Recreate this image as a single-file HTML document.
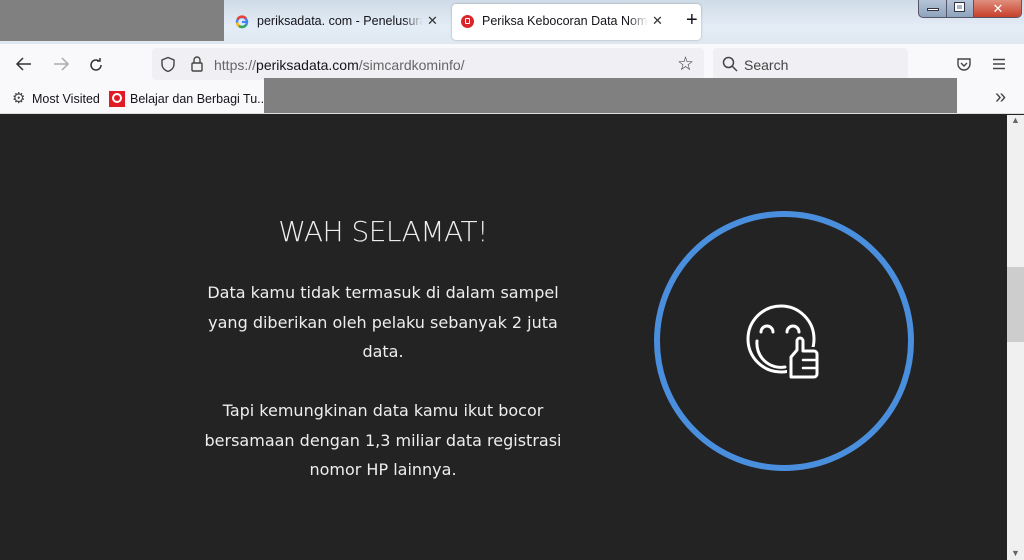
<!DOCTYPE html>
<html><head><meta charset="utf-8"><style>
*{margin:0;padding:0;box-sizing:border-box}
body{width:1024px;height:560px;overflow:hidden;position:relative;font-family:"Liberation Sans","DejaVu Sans",sans-serif;background:#232323}
.a{position:absolute}
.tabbar{left:0;top:0;width:1024px;height:44px;background:linear-gradient(180deg,#cfdbe8,#e4edf6 60%,#dfe8f1)}
.tx{font-size:12.5px;color:#15141a;white-space:nowrap}
.nav{left:0;top:44px;width:1024px;height:42px;background:#f9f9fb}
.bm{left:0;top:86px;width:1024px;height:28px;background:#f9f9fb;border-bottom:1px solid #ddd}
.c{font-family:"DejaVu Sans","Liberation Sans",sans-serif;color:#eee;text-align:center}
.x{font-size:13px;color:#333}
</style></head><body>
<div class="a tabbar"></div>
<div class="a" style="left:0;top:0;width:224px;height:41px;background:#808080"></div>
<svg class="a" style="left:235px;top:15px" width="14" height="14" viewBox="0 0 14 14"><circle cx="7" cy="7" r="5" fill="none" stroke="#4285f4" stroke-width="2.4"/><path d="M7 7h5" stroke="#4285f4" stroke-width="2.2"/><path d="M2.5 4.5A5 5 0 0 1 11 3.5" stroke="#ea4335" stroke-width="2.4" fill="none"/><path d="M2 7.5A5 5 0 0 0 4 11" stroke="#fbbc05" stroke-width="2.4" fill="none"/><path d="M4 11A5 5 0 0 0 11 10" stroke="#34a853" stroke-width="2.4" fill="none"/></svg>
<div class="a tx" style="left:257px;top:14px;width:166px;overflow:hidden;-webkit-mask-image:linear-gradient(90deg,#000 88%,transparent)">periksadata. com - Penelusuran</div>
<div class="a x" style="left:427px;top:13px">✕</div>
<div class="a" style="left:452px;top:4px;width:249px;height:36px;background:#fff;border-radius:4px;box-shadow:0 0 2px rgba(0,0,0,.3)"></div>
<div class="a" style="left:461px;top:15px;width:13px;height:13px;border-radius:50%;background:#d9262b"></div>
<div class="a" style="left:465px;top:18px;width:5px;height:6px;border:1px solid #fff;border-radius:1px"></div>
<div class="a tx" style="left:482px;top:14px;width:166px;overflow:hidden;-webkit-mask-image:linear-gradient(90deg,#000 88%,transparent)">Periksa Kebocoran Data Nomor</div>
<div class="a x" style="left:652px;top:13px">✕</div>
<div class="a tx" style="left:686px;top:9px;font-size:20px">+</div>
<div class="a" style="left:918px;top:0;width:104px;height:18px;border:1px solid #556;border-top:none;border-radius:0 0 5px 5px;background:linear-gradient(#b5c4d8,#8ea3bd);overflow:hidden">
<div class="a" style="left:0;top:0;width:28px;height:17px;border-right:1px solid #556"></div>
<div class="a" style="left:8px;top:8px;width:12px;height:3px;background:#fff;border:1px solid #334"></div>
<div class="a" style="left:28px;top:0;width:27px;height:17px;border-right:1px solid #556"></div>
<div class="a" style="left:36px;top:3px;width:9px;height:8px;border:2px solid #fff;outline:1px solid #334"></div>
<div class="a" style="left:55px;top:0;width:48px;height:17px;background:linear-gradient(#e08f7f,#c7402a);color:#fff;font-weight:bold;text-align:center;font-size:13px;line-height:17px">✕</div>
</div>
<div class="a nav"></div>
<svg class="a" style="left:14px;top:56px" width="20" height="16" viewBox="0 0 20 16" fill="none" stroke="#333" stroke-width="1.5"><path d="M3 8h14M9 2L3 8l6 6"/></svg>
<svg class="a" style="left:51px;top:56px" width="20" height="16" viewBox="0 0 20 16" fill="none" stroke="#aaa" stroke-width="1.5"><path d="M3 8h14M11 2l6 6-6 6"/></svg>
<svg class="a" style="left:88px;top:57px" width="16" height="16" viewBox="0 0 16 16" fill="none" stroke="#333" stroke-width="1.5"><path d="M13 8A5 5 0 1 1 11 4"/><path d="M9 4h3V1" /></svg>
<div class="a" style="left:152px;top:48px;width:552px;height:32px;background:#f0f0f4;border-radius:4px"></div>
<svg class="a" style="left:160px;top:56px" width="16" height="17" viewBox="0 0 16 17" fill="none" stroke="#444" stroke-width="1.4"><path d="M8 1.5L2 4v4c0 4 3 6.5 6 7.5 3-1 6-3.5 6-7.5V4z"/></svg>
<svg class="a" style="left:190px;top:55px" width="14" height="18" viewBox="0 0 14 18" fill="none" stroke="#444" stroke-width="1.4"><rect x="2" y="8" width="10" height="8" rx="1"/><path d="M4 8V5a3 3 0 0 1 6 0v3"/></svg>
<div class="a" style="left:214px;top:57px;font-size:14px;color:#666;white-space:nowrap">https://<span style="color:#15141a">periksadata.com</span>/simcardkominfo/</div>
<div class="a" style="left:677px;top:53px;font-size:19px;color:#333">☆</div>
<div class="a" style="left:713px;top:48px;width:195px;height:32px;background:#f0f0f4;border-radius:4px"></div>
<svg class="a" style="left:722px;top:56px" width="16" height="16" viewBox="0 0 16 16" fill="none" stroke="#444" stroke-width="1.5"><circle cx="6.5" cy="6.5" r="5"/><path d="M10 10l5 5"/></svg>
<div class="a" style="left:744px;top:57px;font-size:14px;color:#444">Search</div>
<svg class="a" style="left:956px;top:57px" width="16" height="15" viewBox="0 0 16 15" fill="none" stroke="#444" stroke-width="1.4"><path d="M2 2h12v5a6 6 0 0 1-12 0z"/><path d="M5 6l3 3 3-3"/></svg>
<svg class="a" style="left:992px;top:58px" width="14" height="12" viewBox="0 0 14 12" stroke="#444" stroke-width="1.4"><path d="M1 1.5h12M1 6h12M1 10.5h12"/></svg>
<div class="a bm"></div>
<div class="a" style="left:12px;top:89px;font-size:15px;color:#444">⚙</div>
<div class="a tx" style="left:32px;top:92px">Most Visited</div>
<div class="a" style="left:109px;top:91px;width:16px;height:16px;background:#e01b24"><div class="a" style="left:3px;top:2px;width:10px;height:10px;border:2px solid #fff;border-radius:50%"></div></div>
<div class="a tx" style="left:130px;top:92px">Belajar dan Berbagi Tu...</div>
<div class="a" style="left:264px;top:78px;width:693px;height:35px;background:#808080"></div>
<div class="a" style="left:995px;top:86px;font-size:20px;color:#444">»</div>
<div class="a" style="left:1007px;top:115px;width:17px;height:445px;background:#f0f0f0"></div>
<div class="a" style="left:1007px;top:267px;width:17px;height:75px;background:#cdcdcd"></div>
<div class="a" style="left:1011px;top:115px;font-size:9px;color:#666">▲</div>
<div class="a" style="left:1011px;top:548px;font-size:9px;color:#666">▼</div>
<div class="a c" style="left:183px;top:215px;width:400px;font-size:28px;font-weight:200;letter-spacing:-0.5px">WAH SELAMAT!</div>
<div class="a c" style="left:183px;top:278px;width:400px;font-size:16px;line-height:29.5px">Data kamu tidak termasuk di dalam sampel<br>yang diberikan oleh pelaku sebanyak 2 juta<br>data.<br><br>Tapi kemungkinan data kamu ikut bocor<br>bersamaan dengan 1,3 miliar data registrasi<br>nomor HP lainnya.</div>
<div class="a" style="left:654px;top:211px;width:260px;height:260px;border:6px solid #4a8fdd;border-radius:50%"></div>
<svg class="a" style="left:745px;top:303px" width="78" height="78" viewBox="0 0 78 78" fill="none" stroke="#fff" stroke-width="3" stroke-linecap="round" stroke-linejoin="round">
<circle cx="36" cy="36" r="33"/>
<path d="M12 38a24 24 0 0 0 28 26"/>
<path d="M16 29a6 6 0 0 1 12 0M42 29a6 6 0 0 1 12 0"/>
<path d="M46 74V54l6-7v-9a3 3 0 0 1 6 0v10h11a3 3 0 0 1 3 3v20a3 3 0 0 1-3 3z" fill="#232323" stroke="#232323" stroke-width="8"/>
<path d="M46 74V54l6-7v-9a3 3 0 0 1 6 0v10h11a3 3 0 0 1 3 3v20a3 3 0 0 1-3 3z"/>
<path d="M58 57h14M58 65h14" stroke-width="2.5"/>
</svg>
</body></html>
